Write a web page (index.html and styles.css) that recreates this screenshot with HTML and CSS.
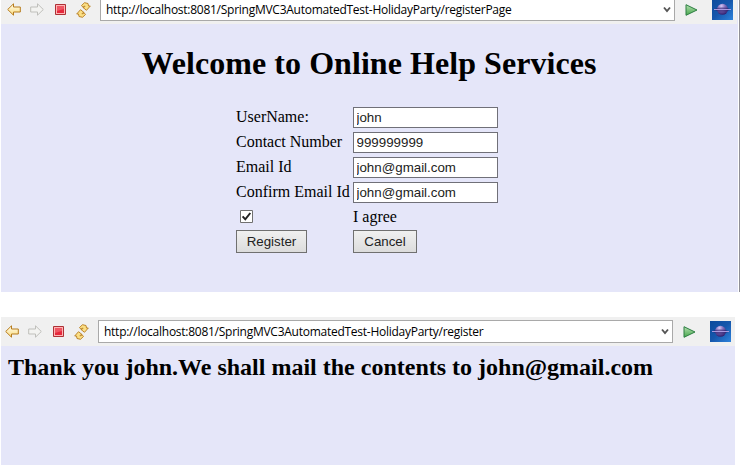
FILE: index.html
```
<!DOCTYPE html>
<html lang="en">
<head>
<meta charset="utf-8">
<title>Online Help Services</title>
<link rel="stylesheet" href="styles.css">
</head>
<body>
<svg class="defs" width="0" height="0" aria-hidden="true">
  <defs>
    <linearGradient id="gold" x1="0" y1="0" x2="0" y2="1"><stop offset="0" stop-color="#fffdf0"/><stop offset="1" stop-color="#fbdc7c"/></linearGradient>
    <linearGradient id="green" x1="0" y1="0" x2="0" y2="1"><stop offset="0" stop-color="#b5dfb0"/><stop offset="1" stop-color="#45a64b"/></linearGradient>
    <linearGradient id="blue" x1="0" y1="0" x2="1" y2="1"><stop offset="0" stop-color="#0b4a9c"/><stop offset=".5" stop-color="#1657ac"/><stop offset="1" stop-color="#2e83dc"/></linearGradient>
    <radialGradient id="ball" cx=".4" cy=".2" r=".8"><stop offset="0" stop-color="#d6c8f5"/><stop offset=".4" stop-color="#8270bd"/><stop offset="1" stop-color="#33206f"/></radialGradient>
    <symbol id="back" viewBox="0 0 14 13"><path d="M.7 6.5 6.500.8V4h6.800v5H6.500v3.200z" fill="url(#gold)" stroke="#b77c1d"/></symbol>
    <symbol id="forward" viewBox="0 0 14 13"><path d="M13.300 6.500 7.500.8V4H.7v5h6.800v3.200z" fill="#f3f3f1" stroke="#bfbfbb"/></symbol>
    <symbol id="stop" viewBox="0 0 11 11"><path d="M.5.5h10v10H.5z" fill="#ffb4b4" stroke="#ad3035"/><path d="M2 2h7v7H2z" fill="#e5283c"/><path d="M2 2h7v3L2 7z" fill="#ef5663"/></symbol>
    <symbol id="refresh" viewBox="0 0 15 16"><g fill="#fbdf85" stroke="#b77c1d" stroke-width=".9" stroke-linejoin="round"><path d="M5.500 3.500 8.500.7 12 1.500 12.500 4H14.300L10.500 8.300 7 5.500 9 4.500 8.500 3.800 7 5.300z"/><path d="M9.500 12.500 6.500 15.300 3 14.500 2.500 12H.7L4.500 7.700 8 10.500 6 11.500 6.500 12.200 8 10.700z"/></g></symbol>
    <symbol id="chevron" viewBox="0 0 8 7"><path d="M1 1.500 4 5 7 1.500" fill="none" stroke="#555" stroke-width="1.900"/></symbol>
    <symbol id="go" viewBox="0 0 13 12"><path d="M1 .7 12 6 1 11.300z" fill="url(#green)" stroke="#2c7e42"/></symbol>
    <symbol id="globe" viewBox="0 0 21 21"><path d="M0 0h21v21H0z" fill="url(#blue)"/><circle cx="10.500" cy="10.300" r="5.500" fill="url(#ball)"/><ellipse cx="10.500" cy="10.500" rx="8" ry="2" fill="#291a65" opacity=".45"/><path d="M2 10.500h17" stroke="#a99ae0"/></symbol>
  </defs>
</svg>

<section class="window window-register">
  <header class="toolbar">
    <svg class="back"><use href="#back"/></svg>
    <svg class="forward"><use href="#forward"/></svg>
    <svg class="stop"><use href="#stop"/></svg>
    <svg class="refresh"><use href="#refresh"/></svg>
    <div class="address"><span class="url">http://localhost:8081/SpringMVC3AutomatedTest-HolidayParty/registerPage</span><svg class="chevron"><use href="#chevron"/></svg></div>
    <svg class="go"><use href="#go"/></svg>
    <svg class="globe"><use href="#globe"/></svg>
  </header>
  <main>
    <h1>Welcome to Online Help Services</h1>
    <form class="form">
      <label for="user">UserName:</label><input class="field" id="user" type="text" value="john">
      <label for="phone">Contact Number</label><input class="field" id="phone" type="text" value="999999999">
      <label for="email">Email Id</label><input class="field" id="email" type="text" value="john@gmail.com">
      <label for="confirm">Confirm Email Id</label><input class="field" id="confirm" type="text" value="john@gmail.com">
      <svg class="check" viewBox="0 0 13 13"><path d="M.5.5h12v12H.5z" fill="#fff" stroke="#707070"/><path d="M2.600 6.300 5.300 9.300 10.300 3" fill="none" stroke="#222" stroke-width="2"/></svg><span>I agree</span>
      <button class="register" type="button">Register</button><button class="cancel" type="button">Cancel</button>
    </form>
  </main>
</section>

<section class="window window-result">
  <header class="toolbar">
    <svg class="back"><use href="#back"/></svg>
    <svg class="forward"><use href="#forward"/></svg>
    <svg class="stop"><use href="#stop"/></svg>
    <svg class="refresh"><use href="#refresh"/></svg>
    <div class="address"><span class="url">http://localhost:8081/SpringMVC3AutomatedTest-HolidayParty/register</span><svg class="chevron"><use href="#chevron"/></svg></div>
    <svg class="go"><use href="#go"/></svg>
    <svg class="globe"><use href="#globe"/></svg>
  </header>
  <h2>Thank you john.We shall mail the contents to john@gmail.com</h2>
</section>
</body>
</html>
```
FILE: styles.css
```
* { box-sizing: border-box; }
body {
  margin: 0;
  height: 467px;
  overflow: hidden;
  background: #fff;
  color: #000;
  font-family: "Liberation Serif", serif;
}
.defs { display: block; }
.window {
  margin-left: 1px;
  background: #e5e6f9;
  overflow: hidden;
}
.window-register {
  width: 739px;
  height: 292px;
  border-right: 1px solid #8f8f96;
  box-shadow: inset -1px 0 #fff;
}
.window-register .toolbar,
.window-register main { width: 736px; }
.window-result {
  width: 734px;
  height: 148px;
  margin-top: 25px;
}
.toolbar {
  display: flex;
  align-items: center;
  height: 29px;
  padding-left: 4px;
  background: #f0f0f0;
}
.window-register .toolbar {
  margin-top: -5px;
  padding-left: 6px;
}
.toolbar svg { flex: none; }
.back { width: 14px; height: 13px; }
.forward { width: 14px; height: 13px; margin-left: 9px; }
.stop { width: 11px; height: 11px; margin-left: 11px; }
.refresh { width: 15px; height: 16px; margin-left: 10px; }
.address {
  display: flex;
  flex: none;
  align-items: center;
  justify-content: space-between;
  width: 575px;
  height: 23px;
  margin-left: 9px;
  padding: 0 3px 0 5px;
  background: #fff;
  border: 1px solid #a9a9a9;
}
.url {
  font: 12px/20px "Open Sans", sans-serif;
  letter-spacing: -0.26px;
  white-space: nowrap;
}
.chevron { width: 8px; height: 7px; }
.go { width: 13px; height: 12px; margin-left: 10px; }
.globe { width: 21px; height: 21px; margin-left: 14px; }
h1 {
  margin: 21px 0 0;
  font-size: 32px;
  line-height: 36px;
  letter-spacing: 0.06px;
  text-align: center;
}
.form {
  display: grid;
  grid-template-columns: 115px 145px;
  grid-template-rows: repeat(4, 21px) 19px 23px;
  column-gap: 2px;
  row-gap: 4px;
  align-items: center;
  width: 262px;
  margin: 26px 0 0 235px;
  font-size: 16px;
  line-height: 20px;
  white-space: nowrap;
}
.form label { padding-bottom: 2px; }
.field {
  width: 145px;
  height: 21px;
  margin: 0;
  padding: 0 2.5px;
  border: 1px solid #707078;
  border-radius: 0;
  background: #fff;
  color: #222;
  font: 13.33px "Liberation Sans", sans-serif;
}
.check { width: 13px; height: 13px; margin-left: 4px; }
button {
  height: 23px;
  padding: 0;
  border: 1px solid #707070;
  border-radius: 0;
  background: linear-gradient(#f0f0f0, #dcdcdc);
  color: #222;
  font: 13.33px "Liberation Sans", sans-serif;
}
.register { width: 71px; }
.cancel { width: 64px; }
h2 {
  margin: 7px 0 0 7px;
  font-size: 24px;
  line-height: 28px;
  white-space: nowrap;
}
```
